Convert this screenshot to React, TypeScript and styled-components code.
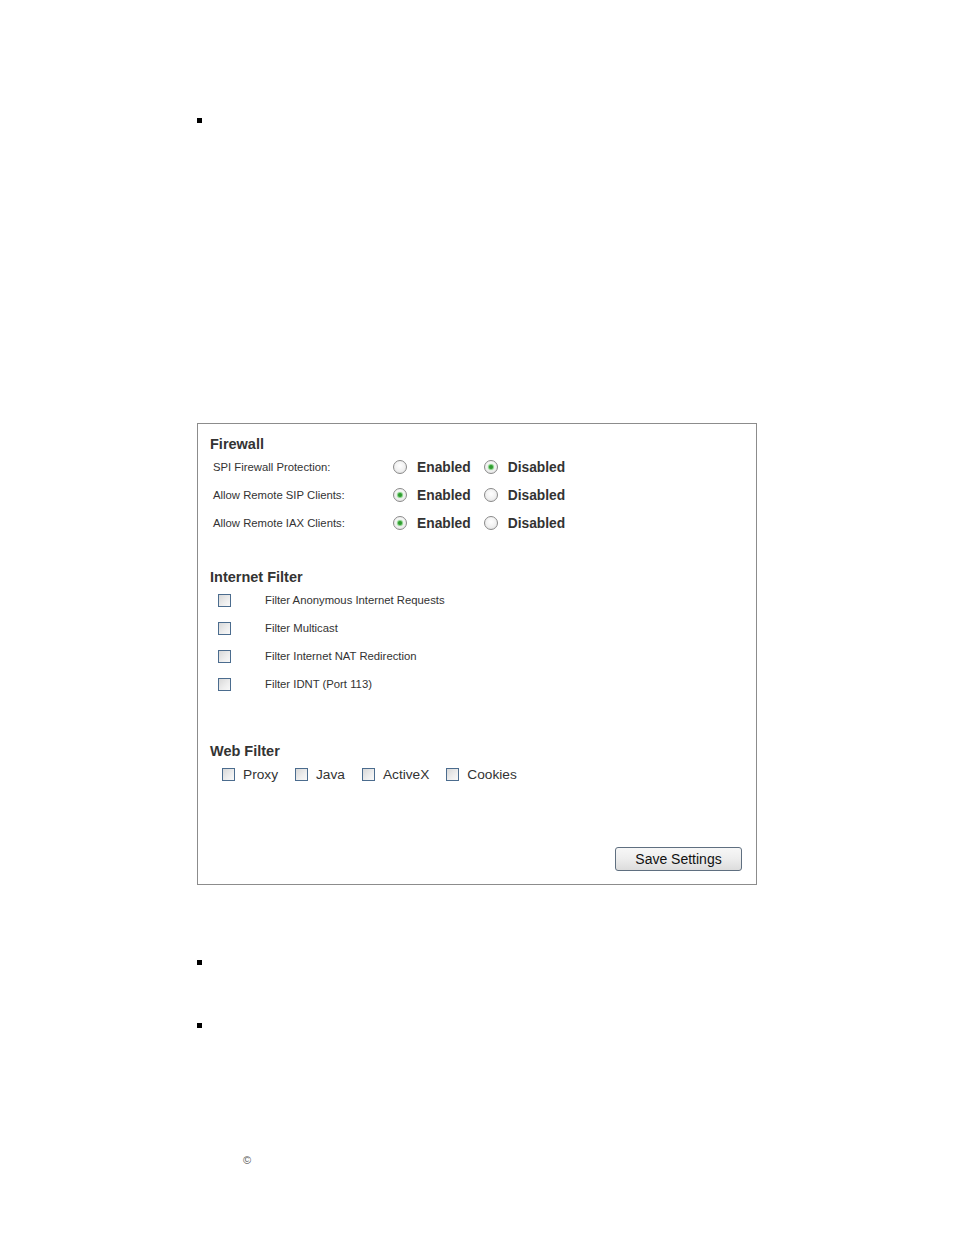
import styled, { createGlobalStyle } from "styled-components";

const GlobalStyle = createGlobalStyle`
  html, body {
    margin: 0;
    padding: 0;
    background: #ffffff;
  }
  body {
    font-family: "Liberation Sans", Arial, sans-serif;
    color: #333333;
  }
`;

const Page = styled.div`
  width: 954px;
  height: 1235px;
  padding-left: 197px;
  padding-top: 118px;
  box-sizing: border-box;
`;

const Bullet = styled.div<{ $top: number }>`
  width: 5px;
  height: 5px;
  background: #000000;
  margin-top: ${(p) => p.$top}px;
`;

const Panel = styled.div`
  width: 560px;
  height: 462px;
  margin-top: 300px;
  border: 1px solid #8c8c8c;
  box-sizing: border-box;
  padding: 11px 14px 13px 12px;
  display: flex;
  flex-direction: column;
`;

const Heading = styled.div<{ $gap?: number }>`
  font-size: 14.5px;
  font-weight: bold;
  line-height: 18px;
  height: 18px;
  color: #333333;
  margin-top: ${(p) => p.$gap ?? 0}px;
`;

const FirewallRow = styled.div`
  display: grid;
  grid-template-columns: 180px auto;
  align-items: center;
  height: 28px;
  padding-left: 3px;
`;

const SmallLabel = styled.span`
  font-size: 11.3px;
  color: #333333;
`;

const RadioGroup = styled.div`
  display: flex;
  align-items: center;
`;

const Radio = styled.span<{ $checked?: boolean }>`
  width: 12px;
  height: 12px;
  border-radius: 50%;
  border: 1px solid #8a8a8a;
  background: radial-gradient(circle at 50% 40%, #ffffff 0%, #f0f0f0 55%, #d8d8d8 100%);
  display: inline-flex;
  align-items: center;
  justify-content: center;
  flex: none;
  &::after {
    content: "";
    width: 4px;
    height: 4px;
    border-radius: 50%;
    background: ${(p) => (p.$checked ? "#2f9a2f" : "transparent")};
    box-shadow: ${(p) => (p.$checked ? "0 0 1px 1px #7ccf7c" : "none")};
  }
`;

const RadioText = styled.span`
  font-size: 13.8px;
  font-weight: bold;
  color: #333333;
  margin-left: 10px;
  margin-right: 13px;
`;

const CheckRow = styled.div`
  display: grid;
  grid-template-columns: 47px auto;
  align-items: center;
  height: 28px;
  padding-left: 8px;
`;

const Box = styled.span`
  width: 11px;
  height: 11px;
  border: 1px solid #4b6c8e;
  background: linear-gradient(135deg, #d8d8d8 0%, #eeeeee 60%, #f8f8f8 100%);
  display: inline-block;
  flex: none;
`;

const WebRow = styled.div`
  display: flex;
  align-items: center;
  height: 28px;
  padding-left: 12px;
`;

const WebItem = styled.label`
  display: flex;
  align-items: center;
  margin-right: 17px;
  font-size: 13.7px;
  color: #333333;
  span + span {
    margin-left: 8px;
  }
`;

const Footer = styled.div`
  margin-top: auto;
  display: flex;
  justify-content: flex-end;
`;

const Button = styled.button`
  width: 127px;
  height: 24px;
  font-family: "Liberation Sans", Arial, sans-serif;
  font-size: 14px;
  color: #111111;
  border: 1px solid #5f6f80;
  border-radius: 3px;
  background: linear-gradient(#f7f7f7 0%, #ededed 50%, #dcdcdc 100%);
  padding: 0;
`;

const Copyright = styled.div`
  margin-top: 126px;
  margin-left: 46px;
  font-size: 11px;
  color: #555555;
  line-height: 12px;
`;

const firewall: [string, boolean][] = [
  ["SPI Firewall Protection:", false],
  ["Allow Remote SIP Clients:", true],
  ["Allow Remote IAX Clients:", true],
];

const internet = [
  "Filter Anonymous Internet Requests",
  "Filter Multicast",
  "Filter Internet NAT Redirection",
  "Filter IDNT (Port 113)",
];

const web = ["Proxy", "Java", "ActiveX", "Cookies"];

export default function App() {
  return (
    <>
      <GlobalStyle />
      <Page>
        <Bullet $top={0} />
        <Panel>
          <Heading>Firewall</Heading>
          {firewall.map(([label, enabled]) => (
            <FirewallRow key={label}>
              <SmallLabel>{label}</SmallLabel>
              <RadioGroup>
                <Radio $checked={enabled} />
                <RadioText>Enabled</RadioText>
                <Radio $checked={!enabled} />
                <RadioText>Disabled</RadioText>
              </RadioGroup>
            </FirewallRow>
          ))}
          <Heading $gap={31}>Internet Filter</Heading>
          {internet.map((item) => (
            <CheckRow key={item}>
              <Box />
              <SmallLabel>{item}</SmallLabel>
            </CheckRow>
          ))}
          <Heading $gap={44}>Web Filter</Heading>
          <WebRow>
            {web.map((item) => (
              <WebItem key={item}>
                <Box />
                <span>{item}</span>
              </WebItem>
            ))}
          </WebRow>
          <Footer>
            <Button>Save Settings</Button>
          </Footer>
        </Panel>
        <Bullet $top={75} />
        <Bullet $top={58} />
        <Copyright>©</Copyright>
      </Page>
    </>
  );
}
